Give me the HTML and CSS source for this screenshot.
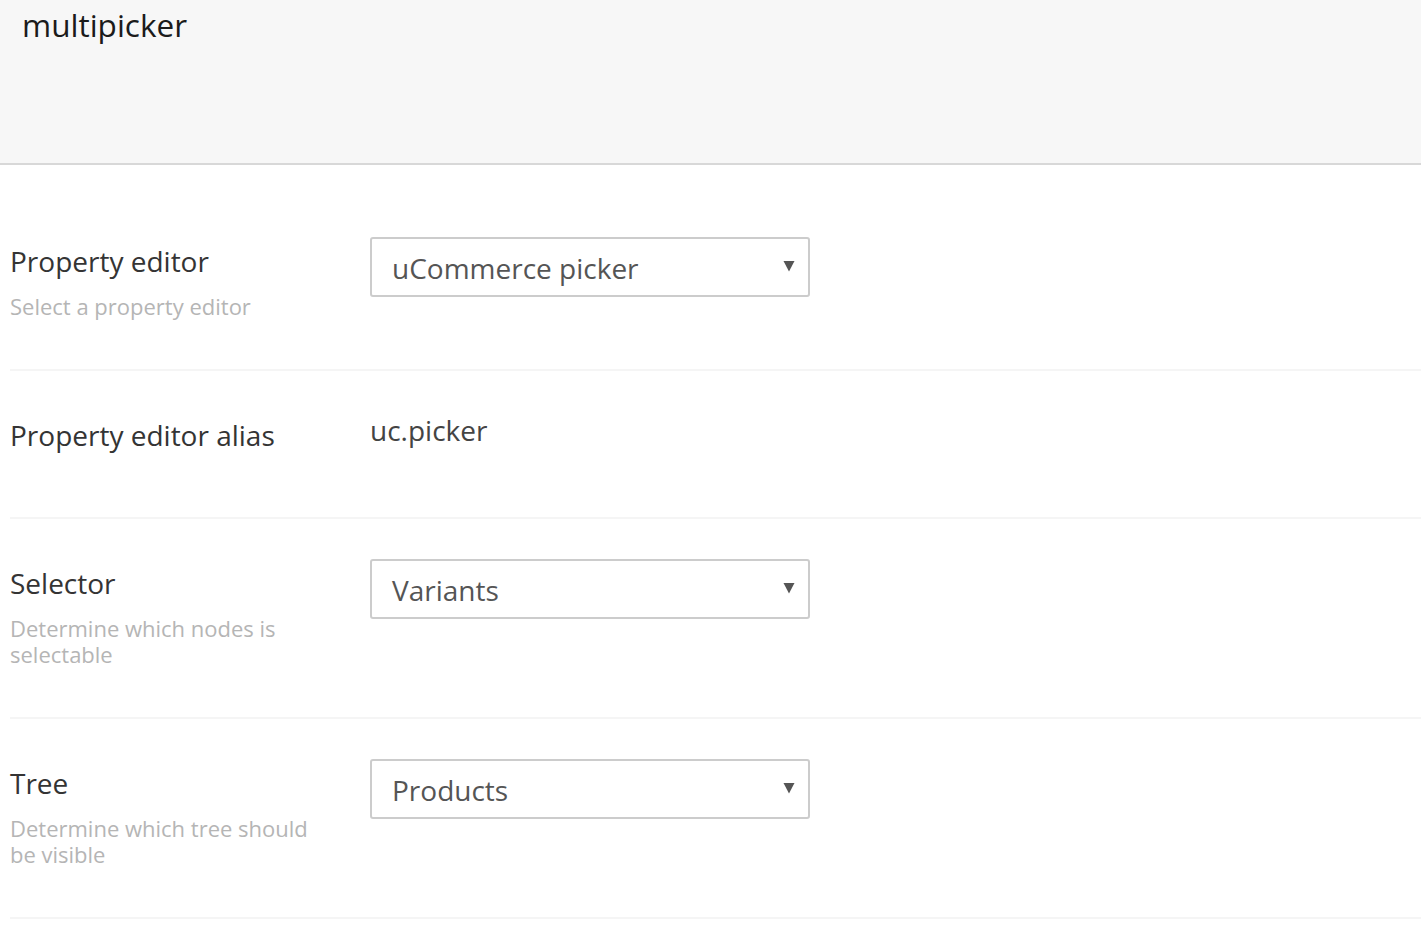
FILE: index.html
```html
<!DOCTYPE html>
<html>
<head>
<meta charset="utf-8">
<link rel="stylesheet" href="styles.css">
</head>
<body>
<header class="header">
  <h1 class="title">multipicker</h1>
</header>
<main class="form">
  <div class="row">
    <div class="label-col">
      <div class="label">Property editor</div>
      <div class="desc">Select a property editor</div>
    </div>
    <div class="control-col">
      <div class="select">
        <span class="select-text">uCommerce picker</span>
        <svg class="arrow" width="12" height="12" viewBox="0 0 12 12"><polygon points="0.5,1 11.5,1 6,11.5" fill="#555"/></svg>
      </div>
    </div>
  </div>
  <div class="row">
    <div class="label-col">
      <div class="label">Property editor alias</div>
      <div class="desc"></div>
    </div>
    <div class="control-col">
      <div class="value">uc.picker</div>
    </div>
  </div>
  <div class="row">
    <div class="label-col">
      <div class="label">Selector</div>
      <div class="desc">Determine which nodes is selectable</div>
    </div>
    <div class="control-col">
      <div class="select">
        <span class="select-text">Variants</span>
        <svg class="arrow" width="12" height="12" viewBox="0 0 12 12"><polygon points="0.5,1 11.5,1 6,11.5" fill="#555"/></svg>
      </div>
    </div>
  </div>
  <div class="row">
    <div class="label-col">
      <div class="label">Tree</div>
      <div class="desc">Determine which tree should be visible</div>
    </div>
    <div class="control-col">
      <div class="select">
        <span class="select-text">Products</span>
        <svg class="arrow" width="12" height="12" viewBox="0 0 12 12"><polygon points="0.5,1 11.5,1 6,11.5" fill="#555"/></svg>
      </div>
    </div>
  </div>
</main>
</body>
</html>
```
FILE: styles.css
```css
html, body {
  margin: 0;
  padding: 0;
  background: #ffffff;
  font-family: "Open Sans", "Liberation Sans", sans-serif;
}

.header {
  height: 165px;
  box-sizing: border-box;
  background: #f7f7f7;
  border-bottom: 2px solid #d8d8d8;
  padding: 6px 0 0 22px;
}

.title {
  margin: 0;
  font-size: 31.5px;
  font-weight: 400;
  line-height: 1.2;
  color: #1b1b1b;
}

.form {
  padding: 32px 0 0 10px;
}

.row {
  display: flex;
  padding: 40px 0 50px 0;
  border-bottom: 2px solid #f5f5f5;
}

.label-col {
  width: 360px;
  flex: none;
  padding-top: 5px;
}

.label {
  font-size: 28px;
  line-height: 39px;
  color: #343434;
}

.desc {
  margin-top: 12px;
  max-width: 315px;
  font-size: 22px;
  line-height: 26px;
  color: #b5b5b5;
}

.control-col {
  flex: 1;
}

.select {
  width: 440px;
  height: 60px;
  box-sizing: border-box;
  border: 2px solid #cccccc;
  border-radius: 3px;
  display: flex;
  align-items: center;
  justify-content: space-between;
  padding: 0 13px 0 20px;
  background: #fff;
}

.select-text {
  font-size: 28px;
  line-height: 39px;
  color: #555555;
  padding-top: 2px;
}

.arrow {
  display: block;
  margin-top: -2px;
}

.value {
  font-size: 28px;
  line-height: 39px;
  color: #444444;
}
```
